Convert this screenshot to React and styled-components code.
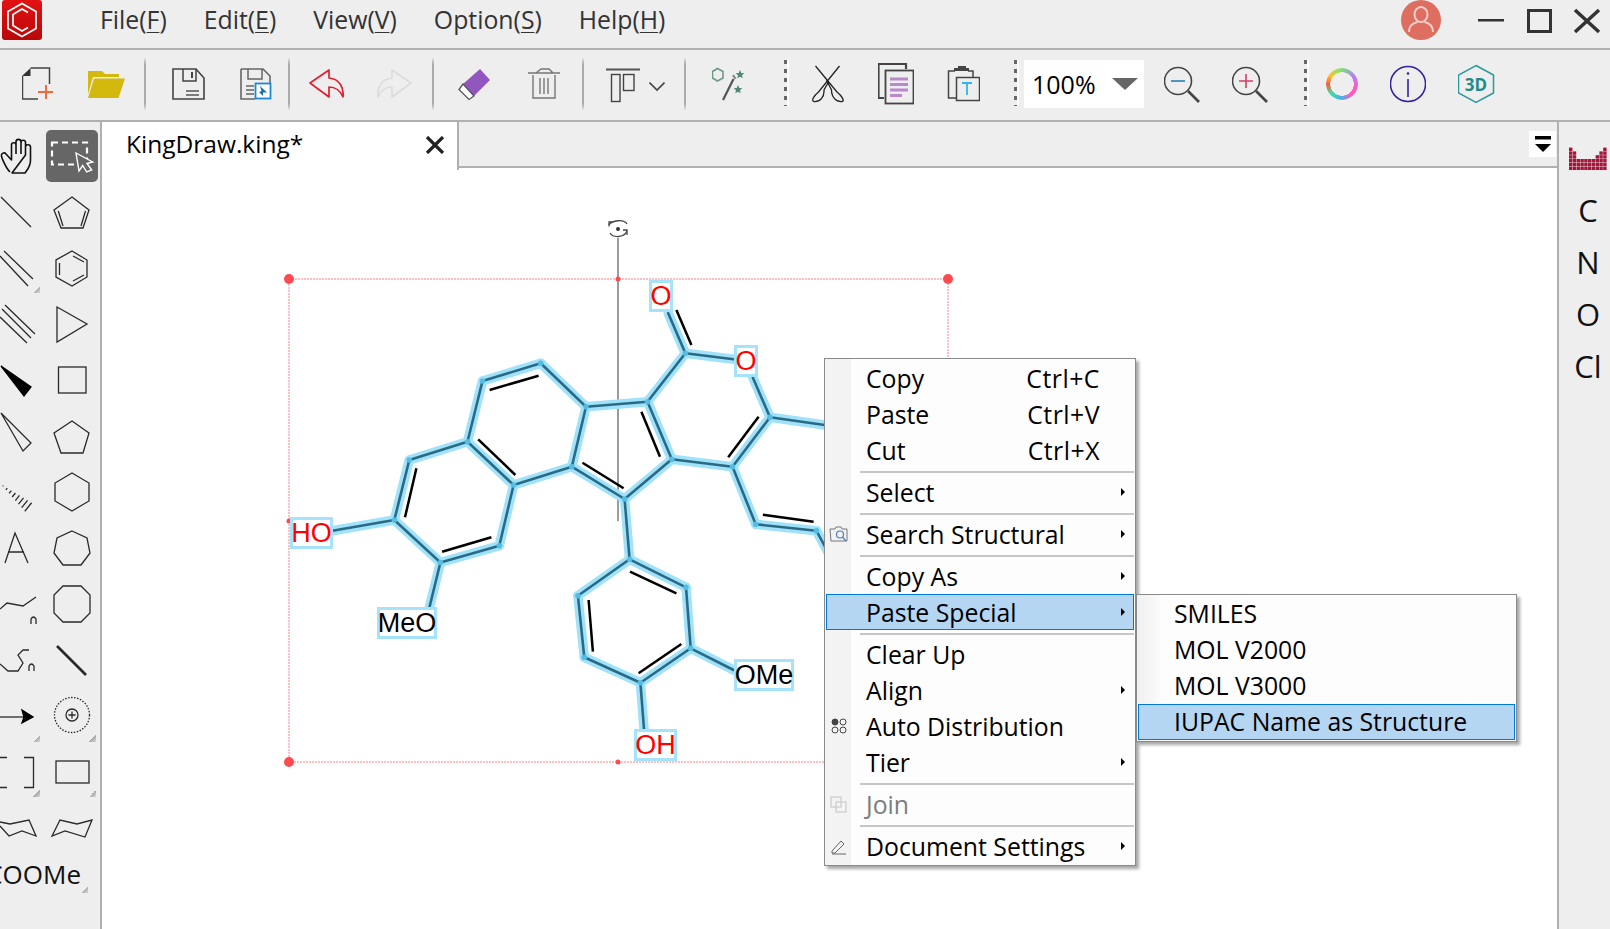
import React from "react";
import styled, { createGlobalStyle } from "styled-components";

const GlobalStyle = createGlobalStyle`
  html, body {
    margin: 0;
    padding: 0;
    background: #eeeeee;
    overflow: hidden;
  }
  * {
    box-sizing: border-box;
  }
`;

const AppShell = styled.div`
  width: 1610px;
  height: 929px;
  display: flex;
  flex-direction: column;
  overflow: hidden;
  background: #eeeeee;
  font-family: "Open Sans", "Noto Sans", sans-serif;
  color: #000;
`;

/* title bar */
const TitleBar = styled.header`
  height: 50px;
  flex: none;
  display: flex;
  align-items: flex-start;
  border-bottom: 2px solid #b0b0b0;
`;

const MenuBar = styled.nav`
  display: flex;
  gap: 37px;
  margin-left: 58px;
  height: 37px;
  align-items: center;
  font-size: 24.800px;
  color: #333;
`;

const Mnemonic = styled.u`
  text-underline-offset: 3px;
  text-decoration-thickness: 1px;
`;

const WindowControls = styled.div`
  margin-left: auto;
  display: flex;
  align-items: flex-start;
`;

const Logo = () => (
  <svg width="40" height="40" viewBox="0 0 40 40" style={{ marginLeft: 2 }}>
    <defs>
      <linearGradient id="logoRed" x1="0" y1="0" x2="0" y2="1">
        <stop offset="0" stopColor="#e21212" />
        <stop offset="1" stopColor="#b80808" />
      </linearGradient>
    </defs>
    <rect width="40" height="40" rx="3" fill="url(#logoRed)" />
    <path d="M20 3.5 34 11.5V28.5L20 36.5 6 28.5V11.5Z" fill="none" stroke="#fff" strokeWidth="1.7" />
    <path d="M26 12.5 20 9 11 14.5V25.5L20 31 26 27.5M11 14.5" fill="none" stroke="#fff" strokeWidth="1.7" />
  </svg>
);

const Avatar = () => (
  <svg width="40" height="40" viewBox="0 0 40 40" style={{ marginRight: 37 }}>
    <circle cx="20" cy="20" r="20" fill="#dd6e60" />
    <ellipse cx="20" cy="14.5" rx="6.5" ry="7.5" fill="none" stroke="#f8cfc8" strokeWidth="2" />
    <path d="M8 32c0-6 4-9 8.500-10M32 32c0-6-4-9-8.500-10" fill="none" stroke="#f8cfc8" strokeWidth="2" />
  </svg>
);

const WinIcon = styled.svg`
  display: block;
  margin-top: 8px;
`;

/* toolbar */
const Toolbar = styled.div`
  height: 72px;
  flex: none;
  display: flex;
  align-items: flex-start;
  padding-top: 10px;
  border-bottom: 2px solid #b0b0b0;
`;

const ToolSvg = styled.svg`
  display: block;
  flex: none;
  margin-left: ${(p) => p.$ml}px;
`;

const ToolIcon = ({ x, w, ml, children }) => (
  <ToolSvg $ml={ml} width={w} height="50" viewBox={`${x} 60 ${w} 50`} fill="none">
    {children}
  </ToolSvg>
);

const Divider = styled.div`
  flex: none;
  width: 2px;
  height: 52px;
  margin-top: -2px;
  margin-left: ${(p) => p.$ml}px;
  background: linear-gradient(#e4e4e4, #aaaaaa 12%, #aaaaaa 88%, #e4e4e4);
`;

const DotDivider = styled.div`
  flex: none;
  width: 5px;
  height: 46px;
  margin-left: ${(p) => p.$ml}px;
  border-right: 2px solid #fff;
  background: repeating-linear-gradient(#666 0 4px, transparent 4px 9px);
`;

const ZoomBox = styled.div`
  flex: none;
  width: 120px;
  height: 48px;
  margin-left: ${(p) => p.$ml}px;
  padding-left: 8px;
  background: #fff;
  display: flex;
  align-items: center;
  font-size: 25px;
`;

const ZoomCaret = styled.span`
  margin-left: auto;
  margin-right: 6px;
  border-left: 13px solid transparent;
  border-right: 13px solid transparent;
  border-top: 12px solid #666;
`;

const ColorRing = styled.div`
  flex: none;
  width: 32px;
  height: 32px;
  margin-top: 8px;
  margin-left: ${(p) => p.$ml}px;
  border-radius: 50%;
  background: conic-gradient(#7fdc7f, #b67cff 60deg, #ff5ac0 100deg, #ff5ac0 140deg, #46b4e6 185deg, #3fe0a0 230deg, #ff5a3a 270deg, #ffc030 305deg, #a0e050 340deg, #7fdc7f);
  -webkit-mask: radial-gradient(closest-side, transparent 72%, #000 75%);
  mask: radial-gradient(closest-side, transparent 72%, #000 75%);
`;

/* main area */
const Body = styled.div`
  flex: 1;
  display: flex;
  min-height: 0;
`;

const Palette = styled.aside`
  width: 102px;
  flex: none;
  border-right: 2px solid #b0b0b0;
  overflow: hidden;
`;

const PaletteRow = styled.div`
  display: flex;
  height: ${(p) => p.$h || 56}px;
`;

const Cell = styled.div`
  position: relative;
  flex: none;
  width: ${(p) => p.$w}px;
  height: ${(p) => p.$height || 56}px;
  margin-top: ${(p) => p.$mt || 0}px;
  background: ${(p) => (p.$active ? "#666666" : "transparent")};
  border-radius: ${(p) => (p.$active ? "5px" : "0")};
`;

const Corner = styled.span`
  position: absolute;
  right: ${(p) => p.$right}px;
  top: ${(p) => p.$top}px;
  width: 7px;
  height: 7px;
  background: linear-gradient(135deg, transparent 50%, #a8a8a8 50%, #d8d8d8);
`;

const GroupText = styled.div`
  position: relative;
  width: 90px;
  height: 34px;
  display: flex;
  justify-content: flex-end;
  align-items: center;
  padding-right: 9px;
  font-size: 26px;
  white-space: nowrap;
  color: #111;
`;

const ToolLines = styled.g`
  fill: none;
  stroke: #2a2a2a;
  stroke-width: 1.300;
  stroke-linejoin: miter;
`;

const Tile = ({ col, top, corner, cornerTop = 45, children }) => {
  const w = col === 1 ? 46 : 52;
  const x = col === 1 ? 0 : 46;
  return (
    <Cell $w={w}>
      <svg width={w} height="56" viewBox={`${x} ${top} ${w} 56`} style={{ display: "block" }}>
        <ToolLines>{children}</ToolLines>
      </svg>
      {corner && <Corner $right={col === 1 ? 6 : 2} $top={cornerTop} />}
    </Cell>
  );
};

const Workspace = styled.main`
  flex: 1;
  min-width: 0;
  display: flex;
  flex-direction: column;
`;

const TabStrip = styled.div`
  height: 46px;
  flex: none;
  display: flex;
  align-items: flex-start;
  border-bottom: 2px solid #b0b0b0;
`;

const Tab = styled.div`
  width: 357px;
  height: 48px;
  flex: none;
  position: relative;
  z-index: 1;
  padding: 3px 12px 0 24px;
  display: flex;
  justify-content: space-between;
  background: #fff;
  border-right: 2px solid #b0b0b0;
  font-size: 24.500px;
  line-height: 38px;
`;

const TabClose = styled.svg`
  margin-top: 11px;
`;

const StripMenu = styled.div`
  margin-left: auto;
  margin-right: 1px;
  margin-top: 9px;
  width: 27px;
  height: 26px;
  background: #fff;
  display: flex;
  justify-content: center;
  align-items: center;
`;

const Canvas = styled.div`
  flex: 1;
  position: relative;
  background: #fff;
`;

const Drawing = styled.svg`
  position: absolute;
  left: 0;
  top: 0;
  display: block;
`;

const AtomLabel = styled.div`
  position: absolute;
  left: ${(p) => p.$x - 102}px;
  top: ${(p) => p.$y - 168}px;
  width: ${(p) => p.$w}px;
  height: 32px;
  display: flex;
  align-items: center;
  justify-content: center;
  border: 3px solid #a5e3fb;
  background: #fff;
  color: ${(p) => (p.$hetero ? "#ff0000" : "#000")};
  font-family: "Liberation Sans", Arial, sans-serif;
  font-size: 27px;
  line-height: 1;
  white-space: nowrap;
`;

const ContextMenu = styled.div`
  position: absolute;
  left: ${824 - 102}px;
  top: ${358 - 168}px;
  width: 312px;
  padding: 1px;
  background: linear-gradient(90deg, #f3f3f3 0, #f3f3f3 26px, #fdfdfd 26px);
  border: 1px solid #8a8a8a;
  box-shadow: 3px 3px 3px rgba(0, 0, 0, 0.35);
  font-size: 24.800px;
`;

const SubMenu = styled(ContextMenu)`
  left: 311px;
  top: 235px;
  width: 381px;
  padding: 1px;
  background: linear-gradient(90deg, #f0f0f0 0, #fafafa 23px, #fdfdfd 23px);
`;

const MenuRow = styled.div`
  position: relative;
  height: 36px;
  padding-left: 40px;
  padding-bottom: 1px;
  display: flex;
  align-items: center;
  white-space: nowrap;
  color: ${(p) => (p.$disabled ? "#7c7c7c" : "#000")};
  background: ${(p) => (p.$active ? "#b5d6f3" : "transparent")};
  outline: ${(p) => (p.$active ? "1px solid #0078d7" : "none")};
  outline-offset: -1px;
`;

const SubRow = styled(MenuRow)`
  padding-left: 36px;
  padding-bottom: 2px;
`;

const Shortcut = styled.span`
  margin-left: auto;
  margin-right: 34px;
  letter-spacing: 0.500px;
`;

const Arrow = styled.span`
  position: absolute;
  right: 9px;
  top: 50%;
  margin-top: -4px;
  border-top: 4px solid transparent;
  border-bottom: 4px solid transparent;
  border-left: 4px solid #000;
`;

const GutterIcon = styled.svg`
  position: absolute;
  left: 3px;
  top: 8px;
`;

const MenuSep = styled.div`
  height: 2px;
  margin: 3px 0 1px 34px;
  background: #c6c6c6;
`;

const ElementBar = styled.aside`
  width: 53px;
  flex: none;
  padding-left: 7px;
  border-left: 2px solid #b0b0b0;
  display: flex;
  flex-direction: column;
  align-items: center;
  font-size: 31px;
  color: #111;
`;

const ElementKey = styled.div`
  height: 52px;
  display: flex;
  align-items: center;
`;

const TableIcon = styled.svg`
  display: block;
  margin: 25px 0 13px 0;
`;

/* molecule, in page coordinates */
const P = {
  A: [685.4, 353.3], B: [647.5, 401.7], C: [586, 406.7], D: [571.8, 466.7], E: [624.6, 499],
  F: [671.8, 459.3], G: [732.5, 466.7], H: [770, 417.3], I: [755.7, 524.3], J: [816.4, 530.7],
  K: [540.7, 363.3], L: [482.5, 381], M: [467.5, 441.7], N: [513.6, 485], O: [409.3, 460],
  Q: [440.4, 562.5], Pp: [394.3, 520], R: [499.3, 545.7], S: [629.6, 559.3], T: [686, 587.3],
  U: [690.7, 648.3], V: [640.4, 682.7], W: [584.3, 657.3], X: [577.9, 595.7],
  o1: [668.2, 313.3], o2: [733.6, 359.3], o3: [752.9, 377.7], h1: [830, 425.700], j1: [830, 556],
  ho: [332.5, 530.7], meo: [429.6, 606.7], ome: [733.6, 670], oh: [644, 729],
};

const BONDS = [
  "A-o1", "A-o2", "A-B", "B-C", "C-D", "D-E", "E-F", "F-B", "F-G", "G-H", "H-o3", "H-h1",
  "G-I", "I-J", "J-j1", "C-K", "K-L", "L-M", "M-N", "N-D", "M-O", "O-Pp", "Pp-Q", "Q-R", "R-N",
  "Pp-ho", "Q-meo", "E-S", "S-T", "T-U", "U-V", "V-W", "W-X", "X-S", "U-ome", "V-oh",
].map((b) => b.split("-"));

const INNER = [
  [676.4, 310, 691.4, 345], [489.6, 390, 538.6, 375.7], [641.4, 411.7, 660, 456.7],
  [582.5, 462.7, 623.6, 488.3], [478.2, 439.3, 515.4, 475], [416.4, 468.3, 405, 517.3],
  [442.1, 551.7, 491.4, 537.3], [758.6, 416.7, 728.2, 457.3], [762.9, 514.7, 813.6, 521.7],
  [630, 571.7, 676.4, 593.3], [588.6, 600, 592.9, 651.7], [681.4, 644, 638.6, 673.3],
];

const ATOMS = ["A", "B", "C", "D", "E", "F", "G", "H", "I", "J", "K", "L", "M", "N", "O", "Pp", "Q", "R", "S", "T", "U", "V", "W", "X"];

const LABELS = [
  { text: "O", x: 649, y: 280, w: 24, hetero: true },
  { text: "O", x: 734, y: 345, w: 24, hetero: true },
  { text: "HO", x: 290, y: 517, w: 43, hetero: true },
  { text: "MeO", x: 377, y: 607, w: 60 },
  { text: "OMe", x: 734, y: 659, w: 60 },
  { text: "OH", x: 634, y: 729, w: 43, hetero: true },
];

const Molecule = () => (
  <g strokeLinecap="round">
    <g stroke="#9fe2fa" strokeWidth="9.500">
      {BONDS.map(([a, b]) => (
        <line key={a + b} x1={P[a][0]} y1={P[a][1]} x2={P[b][0]} y2={P[b][1]} />
      ))}
    </g>
    <g stroke="#2b6a84" strokeWidth="2.600">
      {BONDS.map(([a, b]) => (
        <line key={a + b} x1={P[a][0]} y1={P[a][1]} x2={P[b][0]} y2={P[b][1]} />
      ))}
    </g>
    <g fill="#55bde4">
      {ATOMS.map((a) => (
        <circle key={a} cx={P[a][0]} cy={P[a][1]} r="2.800" />
      ))}
    </g>
    <g stroke="#000" strokeWidth="2.500" strokeLinecap="butt">
      {INNER.map((l) => (
        <line key={l[0]} x1={l[0]} y1={l[1]} x2={l[2]} y2={l[3]} />
      ))}
    </g>
  </g>
);

const Selection = () => (
  <g>
    <g fill="none" stroke="#ff7f86" strokeWidth="1" strokeDasharray="2 1">
      <rect x="289" y="279" width="659" height="483" />
    </g>
    <line x1="618" y1="238" x2="618" y2="521" stroke="#666" strokeWidth="1.300" />
    <g fill="#ff4a52">
      <circle cx="289" cy="279" r="5" />
      <circle cx="948" cy="279" r="5" />
      <circle cx="289" cy="762" r="5" />
      <circle cx="618" cy="279" r="2.500" />
      <circle cx="618" cy="762" r="2.500" />
      <circle cx="289" cy="521" r="2.500" />
    </g>
    <g fill="none" stroke="#444" strokeWidth="1.300">
      <path d="M609 225c3-5 15-6 18-1" />
      <path d="M609 226.500v-4.500h4" />
      <path d="M610 233c3 5 14 5 17-2" />
      <path d="M627 235v-5h-4" />
    </g>
    <circle cx="618" cy="229" r="2" fill="#333" />
  </g>
);

const hashBars = [0, 1, 2, 3, 4, 5, 6, 7].map((i) => {
  const cx = 3 + i * 3.6;
  const cy = 486 + i * 3;
  const half = 0.4 + i * 0.75;
  return [cx - half * 0.6, cy + half * 0.75, cx + half * 0.6, cy - half * 0.75];
});

const TABLE_HEIGHTS = [6, 5, 3, 3, 3, 3, 3, 4, 5, 6];

const MENU = [
  { label: "Copy", key: "Ctrl+C" },
  { label: "Paste", key: "Ctrl+V" },
  { label: "Cut", key: "Ctrl+X" },
  { sep: true },
  { label: "Select", arrow: true },
  { sep: true },
  { label: "Search Structural", arrow: true, icon: "search" },
  { sep: true },
  { label: "Copy As", arrow: true },
  { label: "Paste Special", arrow: true, active: true },
  { sep: true },
  { label: "Clear Up" },
  { label: "Align", arrow: true },
  { label: "Auto Distribution", icon: "dots" },
  { label: "Tier", arrow: true },
  { sep: true },
  { label: "Join", disabled: true, icon: "join" },
  { sep: true },
  { label: "Document Settings", arrow: true, icon: "pen" },
];

const GUTTER_ICONS = {
  search: (
    <g fill="none">
      <path d="M1 5h5l1-2h5l1 2h5v12H2z" stroke="#777" strokeWidth="1" />
      <circle cx="11" cy="10.500" r="3.500" stroke="#4a7fc0" strokeWidth="1.200" />
      <path d="M13.500 13 17 17" stroke="#4a7fc0" strokeWidth="1.200" />
    </g>
  ),
  dots: (
    <g stroke="#444" strokeWidth="1" fill="none">
      <circle cx="6" cy="6" r="3" fill="#444" />
      <circle cx="14" cy="6" r="3" />
      <circle cx="6" cy="14" r="3" />
      <circle cx="14" cy="14" r="3" />
    </g>
  ),
  join: (
    <g stroke="#c4c4c4" strokeWidth="1" fill="none">
      <rect x="2" y="3" width="10" height="10" />
      <rect x="7" y="8" width="10" height="10" />
    </g>
  ),
  pen: (
    <g stroke="#666" strokeWidth="1" fill="none">
      <path d="M3 15 12 5l3 3-9 9H3z" />
      <path d="M3 18h14" />
    </g>
  ),
};

const MENU_ITEMS = ["File", "Edit", "View", "Option", "Help"];
const MENU_KEYS = ["F", "E", "V", "S", "H"];

export default function App() {
  return (
    <AppShell>
      <GlobalStyle />
      <TitleBar>
        <Logo />
        <MenuBar>
          {MENU_ITEMS.map((m, i) => (
            <span key={m}>
              {m}(<Mnemonic>{MENU_KEYS[i]}</Mnemonic>)
            </span>
          ))}
        </MenuBar>
        <WindowControls>
          <Avatar />
          <WinIcon width="26" height="26" viewBox="0 0 26 26">
            <rect y="11" width="26" height="2.500" fill="#333" />
          </WinIcon>
          <WinIcon width="26" height="26" viewBox="0 0 26 26" style={{ marginLeft: 23 }}>
            <rect x="1.500" y="2.500" width="22" height="21" fill="none" stroke="#333" strokeWidth="3" />
          </WinIcon>
          <WinIcon width="28" height="26" viewBox="0 0 28 26" style={{ marginLeft: 20, marginRight: 9 }}>
            <path d="M2 2 26 24M26 2 2 24" stroke="#333" strokeWidth="3.500" />
          </WinIcon>
        </WindowControls>
      </TitleBar>

      <Toolbar>
        <ToolIcon x={22} w={32} ml={22}>
          <path d="M30.500 68H49.500V84M22.500 76V99H38" stroke="#444" strokeWidth="1.500" />
          <path d="M22 76 30.500 68V76Z" fill="#333" />
          <path d="M38 92H53M46 85V99" stroke="#f4683a" strokeWidth="2" />
        </ToolIcon>
        <ToolIcon x={87} w={38} ml={33}>
          <path d="M88 78V71H102L105 74H119V77H93L88 94Z" fill="#d3b80e" />
          <path d="M94 78.500H125L118.500 98H88Z" fill="#d3b80e" />
        </ToolIcon>
        <Divider $ml={19} />
        <ToolIcon x={172} w={33} ml={26}>
          <path d="M173 69H196L204 78V99H173Z" stroke="#444" strokeWidth="1.600" />
          <path d="M183 69V81H196V69" stroke="#444" strokeWidth="1.500" />
          <path d="M192 72V78" stroke="#444" strokeWidth="2" />
          <path d="M186 91H199M186 95H199" stroke="#555" strokeWidth="1.500" />
        </ToolIcon>
        <ToolIcon x={240} w={32} ml={35}>
          <path d="M241 69H263L270 76V83M255 99H241V69" stroke="#666" strokeWidth="1.600" />
          <path d="M248 69V79H262V69" stroke="#666" strokeWidth="1.500" />
          <path d="M246 86H254M246 90H254M246 94H254" stroke="#666" strokeWidth="1.300" />
          <rect x="255.500" y="83.500" width="15" height="15" stroke="#1a8ad4" strokeWidth="1.800" fill="#fff" />
          <path d="M260 86 267 92.500 263 92.500 263 96 259 92 261.500 91Z" fill="#1a6ea8" />
        </ToolIcon>
        <Divider $ml={16} />
        <ToolIcon x={308} w={36} ml={18}>
          <path d="M310 83 329 70V78C340 79 344 88 343 97 340 90 335 87 329 87V97Z" stroke="#e02030" strokeWidth="1.700" strokeLinejoin="round" />
        </ToolIcon>
        <ToolIcon x={375} w={37} ml={31}>
          <path d="M411 83 392 70V78C381 79 377 88 378 97 381 90 386 87 392 87V97Z" stroke="#dcdcdc" strokeWidth="1.700" strokeLinejoin="round" />
        </ToolIcon>
        <Divider $ml={20} />
        <ToolIcon x={458} w={33} ml={24}>
          <path d="M480 69 490 80 474 96 463 84Z" fill="#9157bf" />
          <path d="M463 84 459 89.500 469 99.500 474 96Z" fill="#fff" stroke="#555" strokeWidth="1.300" />
        </ToolIcon>
        <ToolIcon x={528} w={32} ml={37}>
          <path d="M528 73H560M536 73 541 69H549L553 73" stroke="#777" strokeWidth="1.500" />
          <path d="M533 75V98H555V75M540 78V94M544 78V94M548 78V94" stroke="#777" strokeWidth="1.400" />
        </ToolIcon>
        <Divider $ml={22} />
        <ToolIcon x={606} w={34} ml={22}>
          <path d="M606 69.500H640" stroke="#555" strokeWidth="2" />
          <rect x="611.500" y="74.500" width="8.500" height="27" stroke="#444" strokeWidth="1.400" />
          <rect x="623.500" y="74.500" width="10.500" height="16" stroke="#444" strokeWidth="1.400" />
        </ToolIcon>
        <ToolIcon x={649} w={16} ml={9}>
          <path d="M649.500 82.500 657 90 664.500 82.500" stroke="#444" strokeWidth="1.600" />
        </ToolIcon>
        <Divider $ml={19} />
        <ToolIcon x={712} w={33} ml={26}>
          <path d="M717.500 68.500 723 71.500V78L717.500 81 712.500 78V71.500Z" stroke="#6d9b85" strokeWidth="1.600" />
          <path d="M733.500 79 723 100" stroke="#555" strokeWidth="2.200" />
          <path d="M733 75 735.500 79" stroke="#888" strokeWidth="2.200" />
          <path d="M740 70l1.300 3 3 .3-2.300 2 .7 3-2.700-1.600-2.700 1.600.7-3-2.300-2 3-.3zM738 85l1.300 3 3 .3-2.300 2 .7 3-2.700-1.600-2.700 1.600.7-3-2.300-2 3-.3z" fill="#4f8a70" />
        </ToolIcon>
        <DotDivider $ml={39} />
        <ToolIcon x={812} w={32} ml={23}>
          <path d="M815.500 66 837 92C842 96 845 101 842 101.500 836 102 831.500 97 831.500 90L826.500 80" stroke="#222" strokeWidth="1.300" />
          <path d="M839.500 66 818.500 92C813.500 96 811 101 814 101.500 820 102 824.500 97 824 90L828.500 82" stroke="#222" strokeWidth="1.300" />
        </ToolIcon>
        <ToolIcon x={878} w={36} ml={34}>
          <path d="M906 69V64H878.500V98H884" stroke="#444" strokeWidth="2.200" />
          <rect x="885.500" y="70.500" width="28" height="33" stroke="#444" strokeWidth="1.800" fill="#eee" />
          <path d="M890 79H908M890 84.500H908M890 90H908M890 95.500H902" stroke="#b98ac9" strokeWidth="3" />
        </ToolIcon>
        <ToolIcon x={947} w={33} ml={33}>
          <path d="M955 71H948.500V98H956" stroke="#444" strokeWidth="1.500" />
          <path d="M968 71H973V77" stroke="#444" strokeWidth="1.500" />
          <path d="M958 66H966V68H969V71H954V68H958Z" fill="#444" />
          <rect x="956.500" y="77.500" width="23" height="23" stroke="#444" strokeWidth="1.500" />
          <path d="M962 83H972M967 83V95" stroke="#2fb3f3" strokeWidth="1.800" />
        </ToolIcon>
        <DotDivider $ml={34} />
        <ZoomBox $ml={5}>
          100%
          <ZoomCaret />
        </ZoomBox>
        <ToolIcon x={1164} w={36} ml={20}>
          <circle cx="1178" cy="81" r="13.500" stroke="#444" strokeWidth="1.600" />
          <path d="M1188 91 1199 102" stroke="#444" strokeWidth="2.600" />
          <path d="M1171 81H1185" stroke="#3a8fb7" strokeWidth="1.800" />
        </ToolIcon>
        <ToolIcon x={1232} w={36} ml={32}>
          <circle cx="1246" cy="81" r="13.500" stroke="#444" strokeWidth="1.600" />
          <path d="M1256 91 1267 102" stroke="#444" strokeWidth="2.600" />
          <path d="M1239 81H1253M1246 74V88" stroke="#d0406a" strokeWidth="1.600" />
        </ToolIcon>
        <DotDivider $ml={36} />
        <ColorRing $ml={17} />
        <ToolIcon x={1390} w={36} ml={32}>
          <circle cx="1408" cy="84" r="17.500" stroke="#3520a0" strokeWidth="1.500" />
          <circle cx="1408" cy="73.500" r="1.300" fill="#3520a0" />
          <path d="M1408 79V97" stroke="#3520a0" strokeWidth="1.600" />
        </ToolIcon>
        <ToolIcon x={1458} w={37} ml={32}>
          <path d="M1476 65.500 1493.500 75V93L1476 102.500 1458.500 93V75Z" stroke="#2a9a9a" strokeWidth="1.500" />
          <text x="1476" y="91" textAnchor="middle" fill="#1f8a8c" fontFamily="'Open Sans', sans-serif" fontWeight="700" fontSize="17">3D</text>
        </ToolIcon>
      </Toolbar>

      <Body>
        <Palette>
          <PaletteRow $h={63}>
            <Cell $w={46} $height={63}>
              <svg width="46" height="63" viewBox="0 122 46 63" style={{ display: "block" }}>
                <path
                  d="M10 172C6 168 5 165 2 158L1.500 156C1 153 4.500 152 6 154L11.500 160V145C11.500 142 16 142 16 145V154M16 154V142C16 138.500 21 138.500 21 142V154M21 154V142.500C21 139.500 25.500 139.500 25.500 142.500V155M25.500 155V147C25.500 144 30.500 144 30.500 147V160C30.500 167 27 170 25 173H12Z"
                  fill="none"
                  stroke="#111"
                  strokeWidth="1.600"
                  strokeLinejoin="round"
                />
              </svg>
            </Cell>
            <Cell $w={52} $height={52} $mt={8} $active>
              <svg width="52" height="52" viewBox="46 130 52 52" style={{ display: "block" }}>
                <rect x="52" y="142.500" width="35" height="22" fill="none" stroke="#fff" strokeWidth="2.200" strokeDasharray="6 4" />
                <path d="M76 153 92.700 162 87 163.500 91.700 170 86.700 172 82.700 165.500 79 171Z" fill="#666" stroke="#fff" strokeWidth="1.400" />
              </svg>
            </Cell>
          </PaletteRow>
          <PaletteRow>
            <Tile col={1} top={185}><line x1="1" y1="197" x2="31" y2="227" /></Tile>
            <Tile col={2} top={185}>
              <path d="M72 197 89 210 83 228H61L54 210Z" />
              <path d="M58.300 211 63 226M85.500 211 81 226" />
            </Tile>
          </PaletteRow>
          <PaletteRow>
            <Tile col={1} top={241} corner>
              <path d="M4 251 33 279M0 256 28 286" />
            </Tile>
            <Tile col={2} top={241}>
              <path d="M72 251 87 260V277L72 286 56 277V260Z" />
              <path d="M59.500 263V275M73 256 84 262M73 281 84 275" />
            </Tile>
          </PaletteRow>
          <PaletteRow>
            <Tile col={1} top={297}><path d="M5 305 35 334M2 309 31 338M0 317 27 343" /></Tile>
            <Tile col={2} top={297}><path d="M57 307 87 324 57 342Z" /></Tile>
          </PaletteRow>
          <PaletteRow>
            <Tile col={1} top={353}><path d="M1 366 31 387 24 396Z" fill="#000" stroke="#000" /></Tile>
            <Tile col={2} top={353}><rect x="58.500" y="367" width="27.500" height="26" /></Tile>
          </PaletteRow>
          <PaletteRow>
            <Tile col={1} top={409}><path d="M1 413 31 443 23 451Z" /></Tile>
            <Tile col={2} top={409}><path d="M72 421 89 433 83 453H61L54 433Z" /></Tile>
          </PaletteRow>
          <PaletteRow>
            <Tile col={1} top={465}>
              {hashBars.map((b) => (
                <line key={b[0]} x1={b[0]} y1={b[1]} x2={b[2]} y2={b[3]} />
              ))}
            </Tile>
            <Tile col={2} top={465}><path d="M72 473 89 483V501L72 511 55 501V483Z" /></Tile>
          </PaletteRow>
          <PaletteRow>
            <Tile col={1} top={521}><path d="M5 563 15 533 28 563M8 552H24" /></Tile>
            <Tile col={2} top={521}><path d="M72 531 87 538 90 553 81 565H63L54 553 57 538Z" /></Tile>
          </PaletteRow>
          <PaletteRow>
            <Tile col={1} top={577}>
              <path d="M0 609 7 603 23 606 36 597" />
              <path d="M31 624V619Q33.500 615 36 619V624" />
            </Tile>
            <Tile col={2} top={577}><path d="M63 586H81L90 595V613L81 622H63L54 613V595Z" /></Tile>
          </PaletteRow>
          <PaletteRow>
            <Tile col={1} top={633}>
              <path d="M0 664 8 671H18L23 663 18 655 23 650H29" />
              <path d="M29 671V666Q31.500 662 34 666V671" />
            </Tile>
            <Tile col={2} top={633}>
              <path d="M57 646 86 675" strokeWidth="2.600" />
            </Tile>
          </PaletteRow>
          <PaletteRow>
            <Tile col={1} top={689} corner cornerTop={46}>
              <path d="M0 717H24" />
              <path d="M22 710 33 717 22 723 24 717Z" fill="#000" stroke="#000" />
            </Tile>
            <Tile col={2} top={689} corner cornerTop={46}>
              <circle cx="72" cy="715" r="17.500" strokeDasharray="1.500 1.500" />
              <circle cx="72" cy="715" r="6" />
              <path d="M68.500 715H75.500M72 711.500V718.500" />
            </Tile>
          </PaletteRow>
          <PaletteRow>
            <Tile col={1} top={745} corner>
              <path d="M0 757.500H7M0 787.500H7M24 757.500H33.500V787.500H24" />
            </Tile>
            <Tile col={2} top={745} corner>
              <rect x="56" y="761" width="33" height="22" />
            </Tile>
          </PaletteRow>
          <PaletteRow>
            <Tile col={1} top={801}><path d="M0 822 10 824 29 820 36 836 22 831 9 836 0 826" /></Tile>
            <Tile col={2} top={801}><path d="M52 836 60 820 77 824 92 820 85 837 65 831Z" /></Tile>
          </PaletteRow>
          <GroupText>
            COOMe
            <Corner $right={2} $top={29} />
          </GroupText>
        </Palette>

        <Workspace>
          <TabStrip>
            <Tab>
              KingDraw.king*
              <TabClose width="20" height="18" viewBox="0 0 20 18">
                <path d="M2 1 18 17M18 1 2 17" stroke="#222" strokeWidth="3.200" />
              </TabClose>
            </Tab>
            <StripMenu>
              <svg width="18" height="18" viewBox="0 0 18 18">
                <rect x="1" y="1" width="16" height="3.500" fill="#000" />
                <path d="M1 9H17L9 17Z" fill="#000" />
              </svg>
            </StripMenu>
          </TabStrip>
          <Canvas>
            <Drawing width="1455" height="761" viewBox="102 168 1455 761">
              <Selection />
              <Molecule />
            </Drawing>
            {LABELS.map((l) => (
              <AtomLabel key={l.text + l.x} $x={l.x} $y={l.y} $w={l.w} $hetero={l.hetero}>
                {l.text}
              </AtomLabel>
            ))}
            <ContextMenu>
              {MENU.map((item, i) =>
                item.sep ? (
                  <MenuSep key={i} />
                ) : (
                  <MenuRow key={item.label} $active={item.active} $disabled={item.disabled}>
                    {item.icon && (
                      <GutterIcon width="20" height="20" viewBox="0 0 20 20">
                        {GUTTER_ICONS[item.icon]}
                      </GutterIcon>
                    )}
                    {item.label}
                    {item.key && <Shortcut>{item.key}</Shortcut>}
                    {item.arrow && <Arrow />}
                  </MenuRow>
                )
              )}
              <SubMenu>
                <SubRow>SMILES</SubRow>
                <SubRow>MOL V2000</SubRow>
                <SubRow>MOL V3000</SubRow>
                <SubRow $active>IUPAC Name as Structure</SubRow>
              </SubMenu>
            </ContextMenu>
          </Canvas>
        </Workspace>

        <ElementBar>
          <TableIcon width="38" height="24" viewBox="0 0 40 24">
            {TABLE_HEIGHTS.map((h, c) =>
              Array.from({ length: h }, (_, r) => (
                <rect key={`${c}-${r}`} x={c * 4} y={20 - r * 4} width="3.600" height="3.600" fill="#a3163a" />
              ))
            )}
          </TableIcon>
          <ElementKey>C</ElementKey>
          <ElementKey>N</ElementKey>
          <ElementKey>O</ElementKey>
          <ElementKey>Cl</ElementKey>
        </ElementBar>
      </Body>
    </AppShell>
  );
}
